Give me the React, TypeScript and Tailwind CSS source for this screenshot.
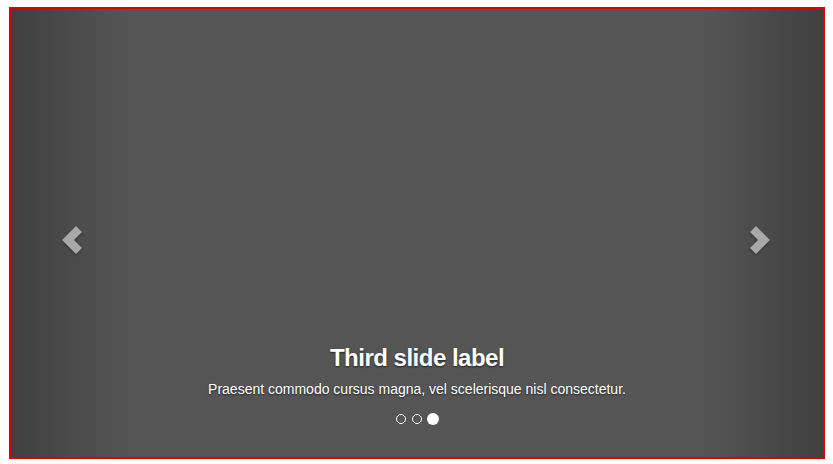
import React from "react";

function Chevron({ dir }: { dir: "left" | "right" }) {
  const pts =
    dir === "left"
      ? "0,14 14,0 20,6 12,14 20,22 14,28"
      : "20,14 6,0 0,6 8,14 0,22 6,28";
  return (
    <svg width="20" height="28" viewBox="0 0 20 28" className="mt-[14px] [filter:drop-shadow(0_1px_1px_rgba(0,0,0,0.4))]">
      <polygon points={pts} fill="#a8a8a8" />
    </svg>
  );
}

export default function App() {
  const dots = [false, false, true];
  return (
    <div className="bg-white w-[833px] h-[464px] pt-[7px] pl-[9px] font-['Liberation_Sans',Arial,sans-serif]">
      <div className="w-[816px] h-[452px] border-2 border-[#e00000]">
        <div className="relative w-full h-full bg-[#555555] overflow-hidden">
          <div className="absolute left-0 top-0 h-full w-[15%] flex items-center justify-center bg-gradient-to-r from-[rgba(0,0,0,0.25)] to-transparent">
            <Chevron dir="left" />
          </div>
          <div className="absolute right-0 top-0 h-full w-[15%] flex items-center justify-center pr-[4px] bg-gradient-to-l from-[rgba(0,0,0,0.25)] to-transparent">
            <Chevron dir="right" />
          </div>
          <div className="relative flex flex-col items-center pt-[336px] text-white [text-shadow:0_1px_2px_rgba(0,0,0,0.6)]">
            <h3 className="text-[24px] leading-[26px] font-bold tracking-[-0.5px]">Third slide label</h3>
            <p className="mt-[8px] text-[14px] leading-[20px]">
              Praesent commodo cursus magna, vel scelerisque nisl consectetur.
            </p>
            <div className="mt-[13px] flex items-center gap-[4px] h-[14px]">
              {dots.map((active, i) =>
                active ? (
                  <span key={i} className="w-[12px] h-[12px] rounded-full bg-white" />
                ) : (
                  <span key={i} className="mx-[1px] w-[10px] h-[10px] rounded-full border border-white" />
                )
              )}
            </div>
          </div>
        </div>
      </div>
    </div>
  );
}
